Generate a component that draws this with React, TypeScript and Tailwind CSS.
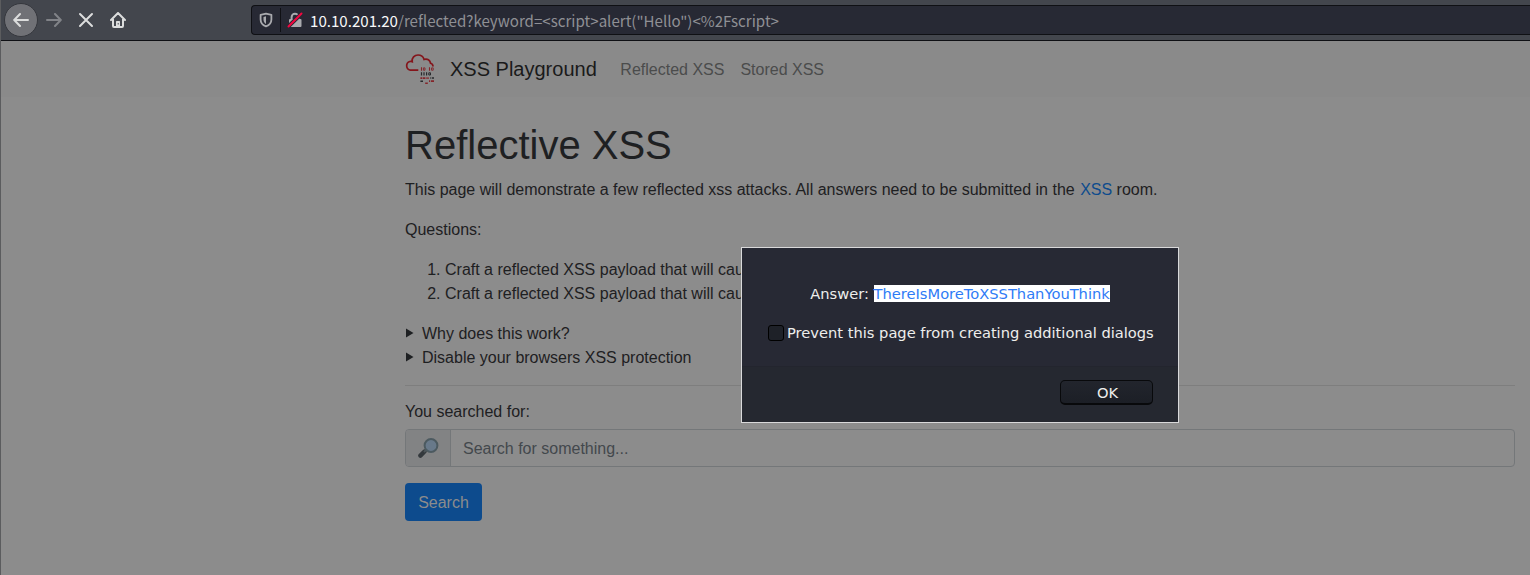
import React from "react";

const sans = "font-['Liberation_Sans',Arial,sans-serif]";

function BackIcon() {
  return (
    <svg width="16" height="16" viewBox="0 0 16 16" fill="none" stroke="currentColor" strokeWidth="2" strokeLinecap="round" strokeLinejoin="round">
      <path d="M15 8H1.5M7 2L1.2 8L7 14" />
    </svg>
  );
}

function Toolbar() {
  return (
    <div className="flex h-[41px] items-start border-b border-[#0f1014] bg-[#43464d] text-[#dcdddd]">
      <div className="ml-[3px] mt-[3px] flex h-[34px] w-[34px] shrink-0 items-center justify-center rounded-full border border-[#35373d] bg-[#707176]">
        <BackIcon />
      </div>
      <div className="ml-2 mt-3 shrink-0 -scale-x-100 text-[#818388]">
        <BackIcon />
      </div>
      <svg className="ml-4 mt-3 shrink-0" width="16" height="16" viewBox="0 0 16 16" fill="none" stroke="currentColor" strokeWidth="2" strokeLinecap="round">
        <path d="M2 2L14 14M14 2L2 14" />
      </svg>
      <svg className="ml-4 mt-3 shrink-0" width="16" height="16" viewBox="0 0 16 16" fill="none" stroke="currentColor" strokeWidth="2" strokeLinecap="round" strokeLinejoin="round">
        <path d="M1 8L8 1L15 8M3 7V14Q3 15 4 15H12Q13 15 13 14V7" />
        <path d="M6 15V9.5Q6 9 6.5 9H9.5Q10 9 10 9.5V15" fill="currentColor" stroke="none" />
        <path d="M8.2 11.5V12" stroke="#43464d" strokeWidth="1.2" />
      </svg>
      <div className="ml-[125px] mt-[5px] flex h-[30px] grow items-center rounded-l border border-r-0 border-[#0f1014] bg-[#272934]">
        <svg className="ml-1.5 shrink-0" width="16" height="16" viewBox="0 0 16 16" fill="none" stroke="#a9aaae" strokeWidth="1.8" strokeLinejoin="round">
          <path d="M8 1.6L13.4 2.8V7.5C13.4 11 11.2 13.2 8 14.4C4.8 13.2 2.6 11 2.6 7.5V2.8Z" />
          <path d="M8 4.3L5.5 5V7.5C5.5 9.6 6.6 11 8 11.9Z" fill="#a9aaae" stroke="none" />
        </svg>
        <div className="ml-[6px] h-6 w-px bg-[#0f1014]" />
        <svg className="ml-1.5 shrink-0" width="16" height="16" viewBox="0 0 16 16" fill="none">
          <rect x="2" y="7" width="12.5" height="8" rx="1" fill="#a9aaae" />
          <path d="M4.6 8V5.2A3.4 3.4 0 0 1 11.4 5.2V8" stroke="#a9aaae" strokeWidth="2" />
          <path d="M1 14.8L15 1.2" stroke="#272934" strokeWidth="4" />
          <path d="M1.5 14.5L14.5 1.5" stroke="#f2063f" strokeWidth="2" strokeLinecap="round" />
        </svg>
        <div className="ml-[7px] whitespace-pre font-['Noto_Sans_CJK_SC',sans-serif] text-[15.1px] leading-6 text-[#8f9095]">
          <span className="text-[#f9f9fa]">10.10.201.20</span>
          {'/reflected?keyword=<script>alert("Hello")<%2Fscript>'}
        </div>
      </div>
    </div>
  );
}

function CloudLogo() {
  return (
    <svg width="30" height="30" viewBox="0 0 30 30" fill="none">
      <path d="M13.3 16.2H5.3A4.5 4.5 0 0 1 4.8 7.5C5.7 7.2 6.5 7.3 7.2 7.6C6.6 3.7 9.5 1 13 1C16.3 1 18.3 2.8 19 5.4C22.4 4.2 25.2 6.2 25.5 9.2C27 9.6 28 10.8 28 12.4" stroke="#84151b" strokeWidth="1.7" />
      <g stroke="#84252a">
        <path d="M16.5 13.3V16.7M24.5 13.3V16.7" strokeWidth="1.1" />
        <path d="M18.4 13.9H20V16.2H18.4ZM26.5 13.9H28.2V16.2H26.5Z" strokeWidth=".9" />
        <path d="M15.4 24.1H17.2M17.8 24.1H20.2M20.8 24.1H21.6M22.3 24.1H23.7M24 27.2H25.2M26 27.2H29M20.2 29.3H22.8" strokeWidth="1.8" />
      </g>
      <g stroke="#292a2d">
        <path d="M16.5 18.2V21.6M19 18.2V21.6M21.6 18.2V21.6" strokeWidth="1.2" />
        <path d="M23.8 18.8H25.5V21H23.8Z" />
        <path d="M25.3 24.1H26.3M27 24.1H29M15.4 27.2H18" strokeWidth="1.5" />
      </g>
    </svg>
  );
}

function Navbar() {
  return (
    <nav className="flex h-14 items-center bg-[#8a8a8a] pl-[404px]">
      <CloudLogo />
      <span className="ml-[15px] text-xl leading-[30px] text-[#1a1a1a]">XSS Playground</span>
      <span className="ml-[23.6px] pt-0.5 text-[#4b4c4c]">Reflected XSS</span>
      <span className="ml-4 pt-0.5 text-[#4b4c4c]">Stored XSS</span>
    </nav>
  );
}

function Summary({ children }: { children: React.ReactNode }) {
  return (
    <div className="flex items-center">
      <svg width="17" height="10" viewBox="0 0 17 10" className="-mt-0.5">
        <path d="M1 .5L8.5 5L1 9.5Z" fill="#1e2022" />
      </svg>
      {children}
    </div>
  );
}

function Magnifier() {
  return (
    <svg width="21" height="20" viewBox="0 0 21 20">
      <path d="M2.4 17.6L6.5 13.5" stroke="#34393d" strokeWidth="4.4" strokeLinecap="round" />
      <path d="M6 14L8.5 11.5" stroke="#4d5659" strokeWidth="2" />
      <circle cx="13" cy="7.5" r="6.4" fill="#68798a" stroke="#4c5a60" strokeWidth="2" />
    </svg>
  );
}

function Content() {
  return (
    <main className="ml-[404px] w-[1110px] pt-6">
      <h1 className="mb-[9px] text-[40px] font-medium leading-[48px]">Reflective XSS</h1>
      <p className="mb-4">
        This page will demonstrate a few reflected xss attacks. All answers need to be submitted in the{" "}
        <a className="ml-px text-[#0d4b8d]">XSS</a> room.
      </p>
      <p className="mb-4">Questions:</p>
      <ol className="mb-4 list-decimal pl-10">
        <li>Craft a reflected XSS payload that will cau</li>
        <li>Craft a reflected XSS payload that will cau</li>
      </ol>
      <Summary>Why does this work?</Summary>
      <Summary>Disable your browsers XSS protection</Summary>
      <hr className="mt-[15px] border-[#7e7e7e]" />
      <p className="mb-[5px] mt-3.5">You searched for:</p>
      <div className="flex h-[38px] overflow-hidden rounded border border-[#747779]">
        <div className="flex w-[45px] items-center justify-center border-r border-[#747779] bg-[#828384]">
          <Magnifier />
        </div>
        <div className="flex items-center pl-3 pt-0.5 text-[#43484c]">Search for something...</div>
      </div>
      <button className="mt-4 h-[38px] w-[77px] rounded bg-[#0d4b8d] pt-0.5 text-[#8c8c8c]">Search</button>
    </main>
  );
}

function AlertDialog() {
  return (
    <div className="absolute left-[741px] top-[247px] flex h-[176px] w-[438px] flex-col border border-[#d9d9da] bg-[#272934] font-['DejaVu_Sans',sans-serif] text-[14.667px] leading-[18px] text-[#eeeeec]">
      <div className="mt-[37px] text-center">
        Answer: <span className="bg-white text-[#2e7bf6]">ThereIsMoreToXSSThanYouThink</span>
      </div>
      <div className="ml-[26px] mt-[21px] flex items-center whitespace-nowrap">
        <div className="mr-[3px] h-4 w-4 shrink-0 rounded-[3px] border border-black bg-[#1e2128]" />
        Prevent this page from creating additional dialogs
      </div>
      <div className="mt-auto flex h-[56px] justify-end border-t border-[#23252e] bg-[#252830] pr-[25px] pt-[13px]">
        <button className="h-[25px] w-[93px] rounded-[5px] border border-b-2 border-[#08090b] bg-linear-to-b from-[#22252d] to-[#1c1f26] pl-0.5 pt-0.5">OK</button>
      </div>
    </div>
  );
}

export default function App() {
  return (
    <div className={`relative h-[575px] w-[1530px] overflow-hidden bg-[#8c8c8c] text-base text-[#1e2022] ${sans}`}>
      <div className="flex h-full flex-col border-l border-[#5b5c5e]">
        <Toolbar />
        <Navbar />
        <Content />
      </div>
      <AlertDialog />
    </div>
  );
}
